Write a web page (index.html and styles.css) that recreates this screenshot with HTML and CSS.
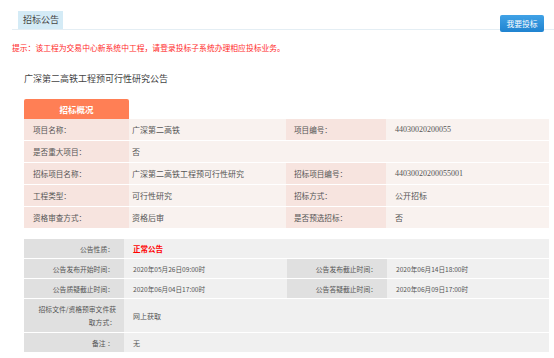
FILE: index.html
```html
<!DOCTYPE html>
<html lang="zh-CN">
<head>
<meta charset="utf-8">
<title>招标公告</title>
<link rel="stylesheet" href="styles.css">
</head>
<body>
<div class="page">
  <div class="header">
    <span class="tab">招标公告</span>
    <a class="btn" href="#">我要投标</a>
  </div>
  <p class="tip">提示：该工程为交易中心新系统中工程，请登录投标子系统办理相应投标业务。</p>
  <div class="content">
    <h1 class="title">广深第二高铁工程预可行性研究公告</h1>
    <div class="section-tab">招标概况</div>
    <table class="info">
      <colgroup><col class="c1"><col class="c2"><col class="c3"><col class="c4"></colgroup>
      <tr>
        <th class="lbl">项目名称：</th><td class="val">广深第二高铁</td>
        <th class="lbl r">项目编号：</th><td class="val r num">44030020200055</td>
      </tr>
      <tr>
        <th class="lbl">是否重大项目：</th><td class="val" colspan="3">否</td>
      </tr>
      <tr>
        <th class="lbl">招标项目名称：</th><td class="val">广深第二高铁工程预可行性研究</td>
        <th class="lbl r">招标项目编号：</th><td class="val r num">44030020200055001</td>
      </tr>
      <tr>
        <th class="lbl">工程类型：</th><td class="val">可行性研究</td>
        <th class="lbl r">招标方式：</th><td class="val r">公开招标</td>
      </tr>
      <tr>
        <th class="lbl">资格审查方式：</th><td class="val">资格后审</td>
        <th class="lbl r">是否预选招标：</th><td class="val r">否</td>
      </tr>
    </table>
    <table class="notice">
      <colgroup><col class="d1"><col class="d2"><col class="d3"><col class="d4"></colgroup>
      <tr>
        <th class="nl">公告性质：</th><td class="nv" colspan="3"><span class="hot">正常公告</span></td>
      </tr>
      <tr>
        <th class="nl">公告发布开始时间：</th><td class="nv date">2020年05月26日09:00时</td>
        <th class="nl">公告发布截止时间：</th><td class="nv date">2020年06月14日18:00时</td>
      </tr>
      <tr>
        <th class="nl">公告质疑截止时间：</th><td class="nv date">2020年06月04日17:00时</td>
        <th class="nl">公告答疑截止时间：</th><td class="nv date">2020年06月09日17:00时</td>
      </tr>
      <tr class="tall">
        <th class="nl wrap">招标文件/资格预审文件获取方式：</th><td class="nv" colspan="3">网上获取</td>
      </tr>
      <tr>
        <th class="nl">备注 ：</th><td class="nv" colspan="3">无</td>
      </tr>
    </table>
  </div>
</div>
</body>
</html>
```
FILE: styles.css
```css
* { box-sizing: border-box; }
body {
  margin: 0;
  background: #fff;
  font-family: "Noto Sans CJK SC", "Noto Sans", sans-serif;
  color: #555;
}
.page { width: 554px; }
.header {
  display: flex;
  justify-content: space-between;
  align-items: flex-end;
  height: 30px;
  margin-left: 12px;
  border-bottom: 1px solid #e4eef4;
}
.tab {
  margin-left: 6px;
  height: 18px;
  line-height: 18px;
  padding: 0 4px 0 5px;
  background: #d4ebf6;
  font-size: 9px;
  color: #444;
}
.btn {
  margin-right: 10px;
  margin-bottom: -3px;
  width: 44px;
  height: 17px;
  line-height: 17px;
  text-align: center;
  font-size: 7.8px;
  color: #fff;
  text-decoration: none;
  background: linear-gradient(#40a2e6, #1f83d0);
  border-radius: 2px;
}
.tip {
  margin: 12px 0 0 12px;
  line-height: 12px;
  font-size: 7.8px;
  color: #ff2a2a;
}
.content { padding-left: 24px; width: 549px; }
.title {
  margin: 19px 0 0;
  line-height: 12px;
  font-size: 9px;
  font-weight: normal;
  color: #444;
}
.section-tab {
  margin-top: 14px;
  width: 105px;
  height: 20px;
  line-height: 20px;
  text-align: center;
  background: #ff7f55;
  color: #fff;
  font-size: 8.5px;
  font-weight: bold;
  border-radius: 2px 2px 0 0;
}
table {
  width: 525px;
  border-collapse: separate;
  border-spacing: 0;
  table-layout: fixed;
}
th { font-weight: normal; }
.info .c1 { width: 105px; }
.info .c2 { width: 157px; }
.info .c3 { width: 100px; }
.info .c4 { width: 163px; }
.info th, .info td {
  height: 22px;
  padding: 0;
  border-bottom: 1px solid #fff;
  text-align: left;
  vertical-align: middle;
}
.info .lbl {
  background: #f7e4df;
  padding-left: 9px;
  font-size: 7.6px;
  color: #555;
}
.info .lbl.r { padding-left: 8px; }
.info .val {
  background: #f9f2ef;
  padding-left: 3px;
  font-size: 8px;
  color: #555;
}
.info .val.r { padding-left: 9px; }
.num { font-family: "Liberation Serif", "Noto Sans CJK SC", serif; font-size: 8px; color: #555; }
.notice { margin-top: 10px; }
.notice .d1 { width: 100px; }
.notice .d2 { width: 163px; }
.notice .d3 { width: 100px; }
.notice .d4 { width: 162px; }
.notice th, .notice td {
  height: 20px;
  padding: 0;
  border-bottom: 1px solid #fff;
  vertical-align: middle;
}
.notice .nl {
  background: #e0e0e0;
  text-align: right;
  padding: 0 10px 0 10px;
  font-size: 6.8px;
  color: #555;
}
.notice .nv {
  background: #f0f0f0;
  text-align: left;
  padding-left: 9px;
  font-size: 7px;
  color: #555;
}
.notice .date { font-size: 6.6px; }
.notice .tall th, .notice .tall td { height: 34px; }
.notice .wrap { line-height: 13px; padding-right: 8px; }
.hot { color: #f00; font-weight: bold; font-size: 7.5px; }
```
